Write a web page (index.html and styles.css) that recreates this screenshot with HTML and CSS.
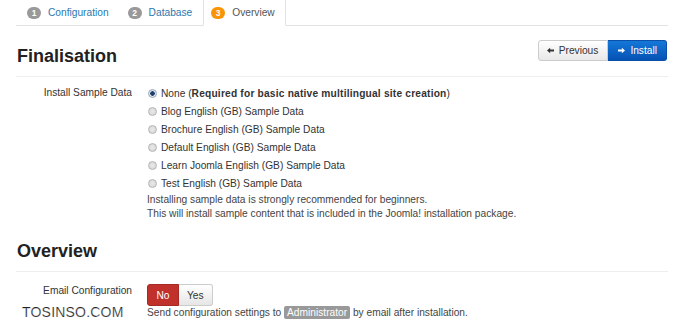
FILE: index.html
```html
<!DOCTYPE html>
<html>
<head>
  <meta charset="UTF-8">
  <meta name="viewport" content="width=device-width, initial-scale=1.0">
  <title>Joomla! Installation - Overview</title>
  <link rel="stylesheet" href="styles.css">
</head>
<body>
  <div class="page">
    <ul class="steps">
      <li class="step"><span class="num">1</span><a href="#">Configuration</a></li>
      <li class="step"><span class="num">2</span><a href="#">Database</a></li>
      <li class="step active"><span class="num">3</span><span>Overview</span></li>
    </ul>

    <div class="head">
      <h3>Finalisation</h3>
      <div class="btn-group">
        <button class="btn" type="button">
          <svg class="ico" viewBox="0 0 10 10"><path d="M0 5 L4.5 1 L4.5 3.5 L10 3.5 L10 6.5 L4.5 6.5 L4.5 9 Z"/></svg>Previous
        </button>
        <button class="btn btn-primary" type="button">
          <svg class="ico" viewBox="0 0 10 10"><path d="M10 5 L5.5 1 L5.5 3.5 L0 3.5 L0 6.5 L5.5 6.5 L5.5 9 Z"/></svg>Install
        </button>
      </div>
    </div>

    <div class="field">
      <div class="label">Install Sample Data</div>
      <div class="controls">
        <label class="radio"><input type="radio" name="sample" checked> None (<b>Required for basic native multilingual site creation</b>)</label>
        <label class="radio"><input type="radio" name="sample"> Blog English (GB) Sample Data</label>
        <label class="radio"><input type="radio" name="sample"> Brochure English (GB) Sample Data</label>
        <label class="radio"><input type="radio" name="sample"> Default English (GB) Sample Data</label>
        <label class="radio"><input type="radio" name="sample"> Learn Joomla English (GB) Sample Data</label>
        <label class="radio"><input type="radio" name="sample"> Test English (GB) Sample Data</label>
        <p class="help">Installing sample data is strongly recommended for beginners.<br>
        This will install sample content that is included in the Joomla! installation package.</p>
      </div>
    </div>

    <div class="head">
      <h3>Overview</h3>
    </div>

    <div class="field field-email">
      <div class="label label-top">Email Configuration</div>
      <div class="controls">
        <div class="toggle">
          <button class="tbtn no" type="button">No</button>
          <button class="tbtn" type="button">Yes</button>
        </div>
        <p class="help">Send configuration settings to <span class="badge">Administrator</span> by email after installation.</p>
      </div>
    </div>

    <div class="watermark">TOSINSO.COM</div>
  </div>
</body>
</html>
```

FILE: styles.css
```css
body {
  margin: 0;
  font-family: "Liberation Sans", Arial, sans-serif;
  font-size: 10.2px;
  color: #333;
  background: #fff;
}
.page {
  position: relative;
  padding: 0 10px 0 16px;
  height: 333px;
  overflow: hidden;
}
.steps {
  list-style: none;
  margin: 0;
  padding: 0 0 0 3px;
  display: flex;
  height: 25px;
  border-bottom: 1px solid #e2e2e2;
}
.step {
  display: flex;
  align-items: center;
  padding: 0 10px 0 8px;
  margin-right: 1px;
  height: 25px;
}
.step a {
  color: #2a78b0;
  text-decoration: none;
}
.step.active {
  background: #fff;
  border: 1px solid #e2e2e2;
  border-top: none;
  border-bottom-color: #fff;
  height: 25px;
  margin-left: 0;
  padding-left: 7px;
  color: #555;
}
.num {
  display: inline-block;
  width: 14px;
  height: 12px;
  line-height: 12px;
  border-radius: 7px;
  background: #999;
  color: #fff;
  font-size: 8.5px;
  font-weight: bold;
  text-align: center;
  margin-right: 7px;
}
.active .num {
  background: #f89406;
}
.head {
  display: flex;
  justify-content: space-between;
  align-items: flex-start;
  margin-top: 14px;
  padding-bottom: 8px;
  border-bottom: 1px solid #eee;
}
.head h3 {
  margin: 4px 0 0 1px;
  font-size: 18px;
  line-height: 24px;
  font-weight: bold;
  color: #222;
}
.btn-group {
  display: flex;
  margin-right: 1px;
}
.btn {
  display: flex;
  align-items: center;
  height: 21px;
  padding: 0 9px 0 8px;
  font-family: inherit;
  font-size: 10.2px;
  color: #333;
  background: linear-gradient(#fff, #e8e8e8);
  border: 1px solid #ccc;
  border-radius: 3px 0 0 3px;
}
.btn .ico {
  width: 7px;
  height: 7px;
  margin-right: 5px;
  fill: #333;
}
.btn-primary {
  color: #fff;
  background: linear-gradient(#1478d8, #0552b5);
  border-color: #0a4fa8;
  border-radius: 0 3px 3px 0;
  border-left: none;
  padding: 0 9px 0 10px;
}
.btn-primary .ico {
  fill: #fff;
}
.field {
  display: grid;
  grid-template-columns: 116px 1fr;
  column-gap: 15px;
  margin-top: 7px;
}
.label {
  text-align: right;
  line-height: 18px;
}
.controls {
  display: flex;
  flex-direction: column;
}
.radio {
  display: flex;
  align-items: center;
  height: 18px;
  margin-left: 1px;
}
.radio b {
  letter-spacing: 0.2px;
}
.radio input {
  appearance: none;
  -webkit-appearance: none;
  width: 9px;
  height: 9px;
  margin: 0 4px 0 0;
  border: 1px solid #b5b5b5;
  border-radius: 50%;
  background: radial-gradient(#eaeaea, #d2d2d2);
}
.radio input:checked {
  background: radial-gradient(circle, #1f3f6e 0 2px, #dfe6ee 2.5px);
  border-color: #9aa8b8;
}
.help {
  margin: 1px 0 0;
  line-height: 14px;
  color: #444;
}
.field-email {
  margin-top: 12px;
}
.label-top {
  line-height: 14px;
}
.toggle {
  display: flex;
}
.tbtn {
  height: 22px;
  padding: 0 8px;
  font-family: inherit;
  font-size: 10.2px;
  color: #333;
  background: linear-gradient(#fff, #e6e6e6);
  border: 1px solid #ccc;
  border-left: none;
  border-radius: 0 3px 3px 0;
}
.tbtn.no {
  width: 32px;
  color: #fff;
  background: #c0312b;
  border: 1px solid #a52a24;
  border-radius: 3px 0 0 3px;
}
.field-email .help {
  margin-top: 0;
}
.badge {
  display: inline-block;
  padding: 0 3px;
  line-height: 13px;
  background: #999;
  color: #fff;
  border-radius: 2px;
}
.watermark {
  position: absolute;
  left: 22px;
  top: 303px;
  font-size: 14px;
  line-height: 18px;
  color: #222;
  letter-spacing: 0.2px;
  font-weight: 300;
  -webkit-text-stroke: 0.2px #fff;
}
```
